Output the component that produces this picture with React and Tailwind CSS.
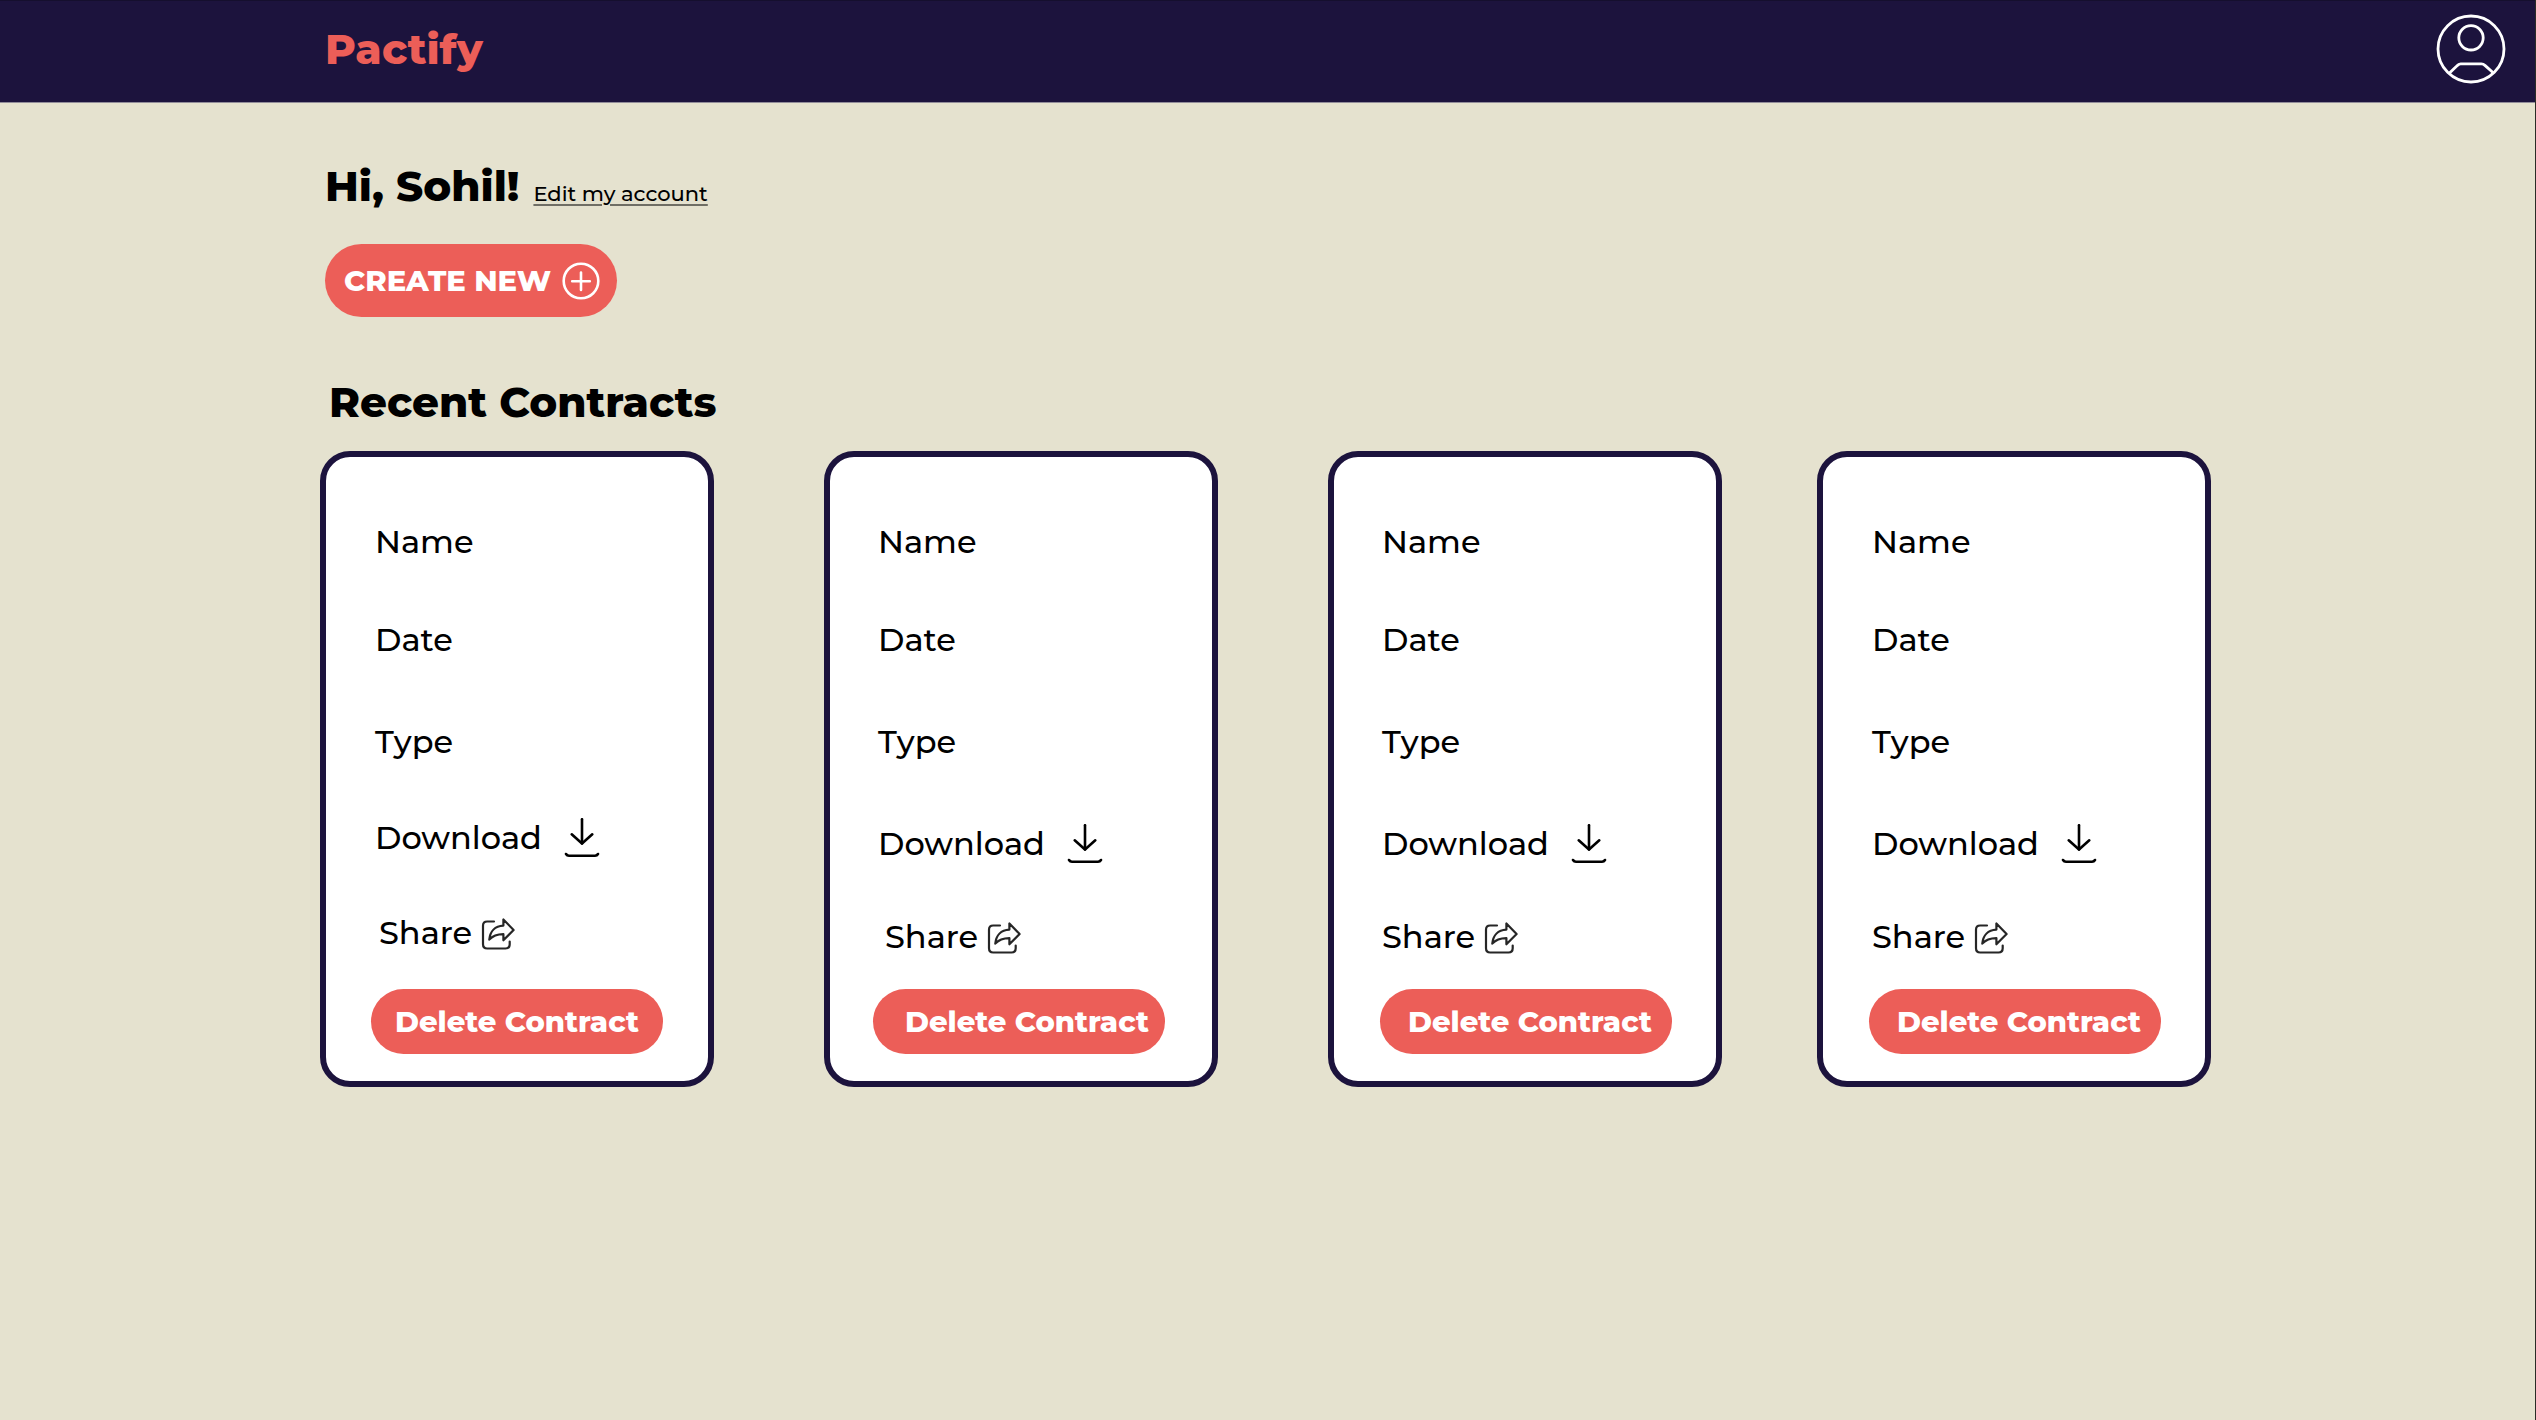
const contracts = [
  {
    id: 1,
    body: "pl-[45px] pr-[45px]",
    text: "pl-1",
    download: "mt-14 pl-1",
    share: "mt-[55px] pl-2",
    remove: "mt-9",
  },
  {
    id: 2,
    body: "pl-[43px] pr-[47px]",
    text: "pl-[5px]",
    download: "mt-[62px] pl-[5px]",
    share: "mt-[53px] pl-3",
    remove: "mt-8 pl-4",
  },
  {
    id: 3,
    body: "pl-[46px] pr-[44px]",
    text: "pl-[2px]",
    download: "mt-[62px] pl-[2px]",
    share: "mt-[53px] pl-[2px]",
    remove: "mt-8 pl-2",
  },
  {
    id: 4,
    body: "pl-[46px] pr-[44px]",
    text: "pl-[3px]",
    download: "mt-[62px] pl-[3px]",
    share: "mt-[53px] pl-[3px]",
    remove: "mt-8 pl-2",
  },
];

function AvatarIcon() {
  return (
    <svg viewBox="0 0 70 70" className="size-[70px]" fill="none" stroke="currentColor" strokeWidth="2.8" strokeLinejoin="round" aria-hidden="true">
      <circle cx="35" cy="35" r="33" />
      <circle cx="35" cy="23.8" r="12.2" />
      <path d="M13 59.5 20.8 52C22.2 50.3 23 49.8 24.6 49.8H45.4C47 49.8 47.8 50.3 49.2 51.6L57.5 59" />
    </svg>
  );
}

function PlusIcon() {
  return (
    <svg viewBox="0 0 38 38" className="size-[38px] shrink-0" fill="none" stroke="currentColor" strokeWidth="2.6" strokeLinecap="round" aria-hidden="true">
      <circle cx="19" cy="19" r="17.3" />
      <path d="M19 10.5v17.5M10.2 19.3h17.6" />
    </svg>
  );
}

function DownloadIcon() {
  return (
    <svg viewBox="0 0 36 40" className="h-10 w-9 shrink-0" fill="none" stroke="currentColor" strokeWidth="2.6" strokeLinecap="round" strokeLinejoin="round" aria-hidden="true">
      <path d="M18 1.2V25.5" />
      <path d="M7.7 16.3 18 25.5 28.3 16.3" />
      <path d="M2 36Q3 37.8 5 37.8H31Q33 37.8 34 36" />
    </svg>
  );
}

function ShareIcon() {
  return (
    <svg viewBox="0 0 34 34" className="mt-[2px] size-[34px] shrink-0 text-neutral-800" fill="none" stroke="currentColor" strokeWidth="2.2" strokeLinecap="round" strokeLinejoin="round" aria-hidden="true">
      <path d="M13 4.5H6.2Q2 4.5 2 8.7V27.3Q2 31.5 6.2 31.5H24.5Q28.7 31.5 28.7 27.3V24.5" />
      <path d="M22.4 2.5V8.6C14 9 9 14.5 8.3 22.6C12 18.6 16.5 17.3 22.4 17.2V23.3L32.6 13Z" />
    </svg>
  );
}

function ContractCard({ contract }) {
  return (
    <article className={`flex w-full max-w-[394px] flex-col rounded-[30px] border-6 border-[#1c133d] bg-white pt-[65px] pb-[27px] text-[32px] leading-10 font-medium ${contract.body}`}>
      <p className={contract.text}>Name</p>
      <p className={`mt-[58px] ${contract.text}`}>Date</p>
      <p className={`mt-[62px] ${contract.text}`}>Type</p>
      <button type="button" className={`flex items-center gap-[22px] self-start ${contract.download}`}>
        Download
        <DownloadIcon />
      </button>
      <button type="button" className={`flex h-10 items-center gap-[9px] self-start ${contract.share}`}>
        Share
        <ShareIcon />
      </button>
      <button type="button" className={`flex h-[65px] items-center justify-center rounded-full bg-[#ec5e58] text-[29px] font-extrabold whitespace-nowrap text-white ${contract.remove}`}>
        Delete Contract
      </button>
    </article>
  );
}

export default function App() {
  return (
    <div className="flex min-h-screen flex-col border-r border-[#2b2c26] bg-[#e5e2cf] font-['Montserrat','Inter',sans-serif] text-black">
      <header className="flex h-[103px] items-center justify-between border-t border-b border-t-[#150f2e] border-b-[#928d9a] bg-[#1c133d] pr-[29px] pb-[6px] pl-[325px]">
        <a href="#home" className="text-[42px] leading-14 font-extrabold text-[#ec5e58]">
          Pactify
        </a>
        <button type="button" aria-label="My account" className="text-white">
          <AvatarIcon />
        </button>
      </header>

      <main className="pt-[55px] pr-[324px] pl-[320px]">
        <div className="flex items-baseline gap-[14px] pl-[5px]">
          <h1 className="text-[42px] leading-14 font-extrabold">Hi, Sohil!</h1>
          <a href="#account" className="text-[21px] leading-8 font-medium underline decoration-[#6f6e65] decoration-2 underline-offset-[3px]">
            Edit my account
          </a>
        </div>

        <button type="button" className="mt-[30px] ml-[5px] flex h-[73px] items-center gap-[11px] rounded-full bg-[#ec5e58] pr-[17px] pl-[19px] text-[29px] font-extrabold text-white">
          CREATE NEW
          <PlusIcon />
        </button>

        <h2 className="mt-[57px] pl-[9px] text-[42px] leading-14 font-extrabold">Recent Contracts</h2>

        <section aria-label="Recent contracts" className="mt-[21px] grid grid-cols-[504fr_504fr_489fr_394fr]">
          {contracts.map((contract) => (
            <ContractCard key={contract.id} contract={contract} />
          ))}
        </section>
      </main>
    </div>
  );
}
